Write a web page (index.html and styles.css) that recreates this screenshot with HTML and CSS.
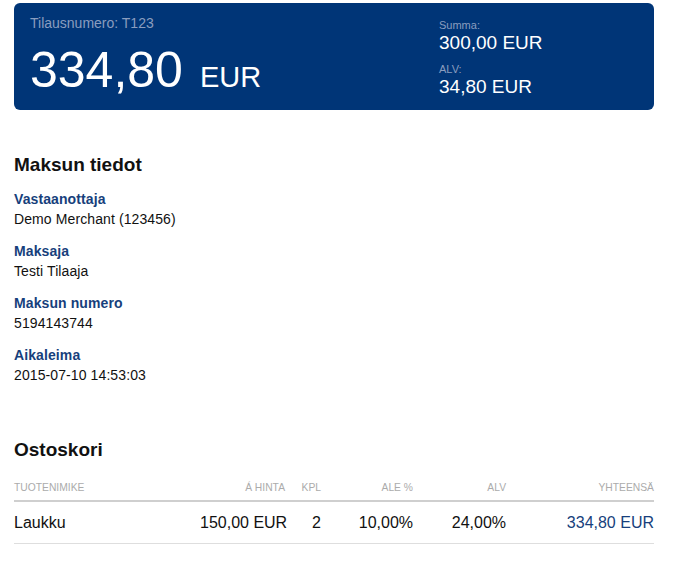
FILE: index.html
```html
<html>
    <head>
        <title>Maksun tiedot</title>
        <link rel="stylesheet" href="styles.css">
    </head>
    <body>
        <div class="sivu">
            <div class="paneeli">
                <div class="vasen">
                    <div class="tilaus">Tilausnumero: T123</div>
                    <div class="iso-summa">334,80<span class="valuutta">EUR</span></div>
                </div>
                <div class="oikea">
                    <div class="pieni">Summa:</div>
                    <div class="arvo">300,00 EUR</div>
                    <div class="pieni alv">ALV:</div>
                    <div class="arvo">34,80 EUR</div>
                </div>
            </div>

            <h2 class="otsikko">Maksun tiedot</h2>
            <div class="tiedot">
                <div class="ryhma">
                    <div class="nimi">Vastaanottaja</div>
                    <div>Demo Merchant (123456)</div>
                </div>
                <div class="ryhma">
                    <div class="nimi">Maksaja</div>
                    <div>Testi Tilaaja</div>
                </div>
                <div class="ryhma">
                    <div class="nimi">Maksun numero</div>
                    <div>5194143744</div>
                </div>
                <div class="ryhma">
                    <div class="nimi">Aikaleima</div>
                    <div>2015-07-10 14:53:03</div>
                </div>
            </div>

            <h2 class="otsikko kori">Ostoskori</h2>
            <table class="taulu">
                <colgroup>
                    <col style="width: 186px">
                    <col style="width: 85px">
                    <col style="width: 36px">
                    <col style="width: 92px">
                    <col style="width: 93px">
                    <col style="width: 148px">
                </colgroup>
                <thead>
                    <tr>
                        <th class="vas">Tuotenimike</th>
                        <th>Á hinta</th>
                        <th>Kpl</th>
                        <th>Ale %</th>
                        <th>ALV</th>
                        <th>Yhteensä</th>
                    </tr>
                </thead>
                <tbody>
                    <tr>
                        <td class="vas">Laukku</td>
                        <td>150,00 EUR</td>
                        <td>2</td>
                        <td>10,00%</td>
                        <td>24,00%</td>
                        <td class="yht">334,80 EUR</td>
                    </tr>
                </tbody>
            </table>
        </div>
    </body>
</html>
```

FILE: styles.css
```css
body {
        margin: 0;
        background: #fff;
        color: #111;
        font-family: "Liberation Sans", Arial, sans-serif;
        font-size: 14px;}

.sivu {
        width: 640px;
        padding: 3px 21px 0 14px;}

.paneeli {
        display: flex;
        height: 107px;
        box-sizing: border-box;
        padding: 12px 16px 0 16px;
        background: #003577;
        border-radius: 6px;
        color: #fff;}

.vasen {flex: 1;}

.tilaus {
        font-size: 14px;
        line-height: 16px;
        color: #8a9dbf;}

.iso-summa {
        margin-top: 14px;
        font-size: 50px;
        line-height: 50px;}

.valuutta {
        font-size: 29px;
        margin-left: 17px;}

.oikea {
        width: 199px;
        padding-top: 3px;}

.pieni {
        font-size: 11px;
        line-height: 14px;
        color: #8a9dbf;}

.alv {margin-top: 8px;}

.arvo {
        font-size: 19px;
        line-height: 22px;}

.otsikko {
        margin: 44px 0 0 0;
        font-size: 19px;
        line-height: 22px;}

.tiedot {
        margin-top: 13px;
        letter-spacing: 0.1px;}

.ryhma {
        line-height: 20px;
        margin-bottom: 12px;}

.ryhma .nimi {
        font-weight: bold;
        color: #173f7c;}

.kori {margin-top: 54px;}

.taulu {
        width: 640px;
        margin-top: 13px;
        border-collapse: collapse;
        table-layout: fixed;}

.taulu th {
        padding: 7px 0 5px 0;
        font-size: 10.3px;
        line-height: 14px;
        font-weight: normal;
        text-transform: uppercase;
        text-align: right;
        white-space: nowrap;
        color: #ababab;
        border-bottom: 2px solid #cfcfcf;}

.taulu td {
        padding: 11px 0 10px 0;
        line-height: 20px;
        text-align: right;
        white-space: nowrap;
        border-bottom: 1px solid #dedede;}

.taulu .vas {text-align: left;}

.taulu .yht {color: #173f7c;}
```
